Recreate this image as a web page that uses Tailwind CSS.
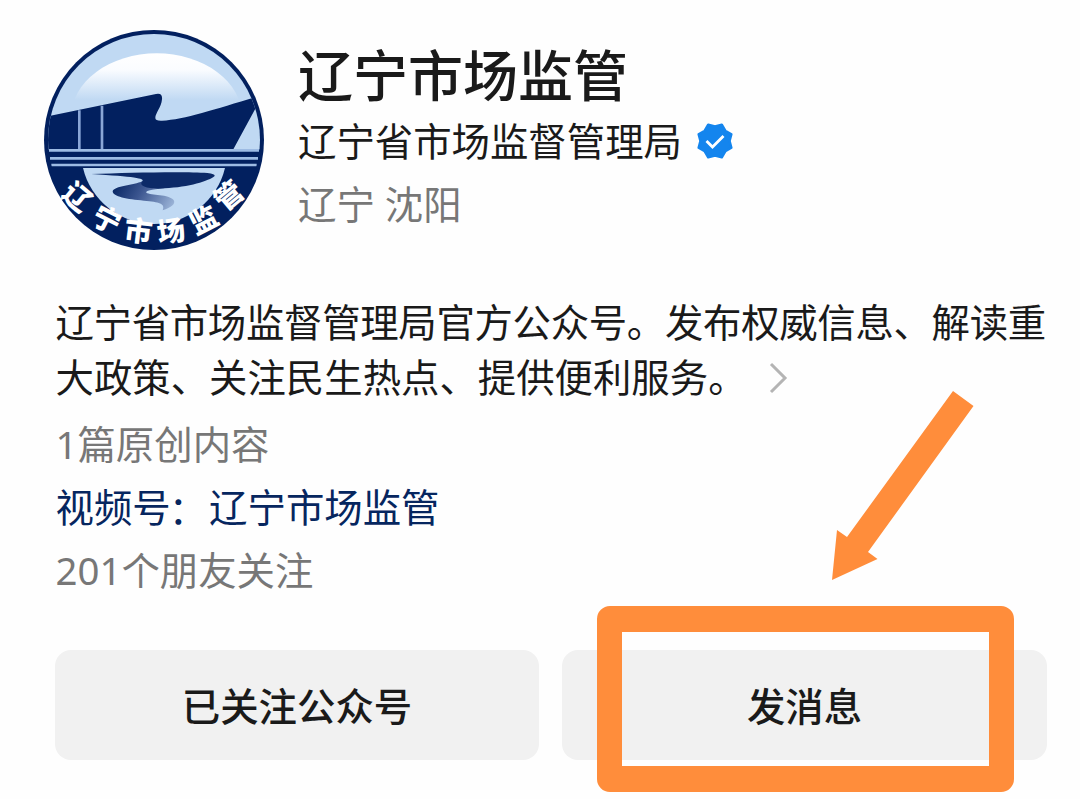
<!DOCTYPE html>
<html lang="zh-CN">
<head>
<meta charset="utf-8">
<title>辽宁市场监管</title>
<script src="https://cdn.jsdelivr.net/npm/@tailwindcss/browser@4"></script>
</head>
<body class="bg-white">
<main class="relative w-[1080px] h-[799px] overflow-hidden bg-[#fefefe] pt-5 font-['Noto_Sans','Noto_Sans_CJK_SC',sans-serif] text-[38.4px] text-[#1a1a1a] whitespace-nowrap">
  <header class="flex pl-[34px] h-[240px]">
    <svg class="w-[240px] h-[240px] shrink-0" viewBox="0 0 720 720">
      <defs>
        <linearGradient id="sun" x1="0" y1="100" x2="0" y2="240" gradientUnits="userSpaceOnUse"><stop offset="0" stop-color="#fff"/><stop offset=".35" stop-color="#fafcff"/><stop offset="1" stop-color="#c0d9f3"/></linearGradient>
        <linearGradient id="river" x1="240" y1="480" x2="410" y2="575" gradientUnits="userSpaceOnUse"><stop offset="0" stop-color="#02215f"/><stop offset=".45" stop-color="#3c5690"/><stop offset="1" stop-color="#9db6d9"/></linearGradient>
        <clipPath id="disc"><circle cx="360" cy="360" r="318"/></clipPath>
      </defs>
      <circle cx="360" cy="360" r="330" fill="#02205f"/>
      <g clip-path="url(#disc)">
        <rect x="30" y="30" width="660" height="360" fill="#c0d9f3"/>
        <ellipse cx="368" cy="290" rx="256" ry="190" fill="url(#sun)"/>
        <path d="M30 291L366 222Q386 218 384 238C382 262 364 280 364 294Q364 303 384 302C455 299 555 263 690 224V244L664 266L598 388H30Z" fill="#02205f"/>
        <path d="M30 387H690V445H30Z" fill="#02205f"/>
        <path d="M136 271V388M204 257V388" stroke="#8aa6d6" stroke-width="8"/>
        <path d="M45 391H675M48 415H672M52 435H668" stroke="#9dbbe3" stroke-width="8"/>
      </g>
      <path d="M147 444H573A219 219 0 0 1 147 444Z" fill="#c0d9f3"/>
      <path d="M325 484C300 496 240 498 236 514C236 530 280 538 330 542C375 546 395 550 386 571C412 563 426 551 419 540C405 522 350 526 337 518C335 512 350 509 392 505Z" fill="url(#river)"/>
      <path d="M172 462C280 458 450 454 520 459Q544 462 542 468C525 483 465 501 392 505C350 509 310 500 325 484C334 475 300 470 172 462Z" fill="#0c2a68"/>
      <g class="font-['Noto_Sans_CJK_SC',sans-serif] font-black" font-size="84" fill="#fff" text-anchor="middle">
        <text y="32" transform="translate(131 530) rotate(40)">辽</text>
        <text y="32" transform="translate(219 598) rotate(27)">宁</text>
        <text y="32" transform="translate(313 632) rotate(7)">市</text>
        <text y="32" transform="translate(411 632) rotate(-9)">场</text>
        <text y="32" transform="translate(508 598) rotate(-27)">监</text>
        <text y="32" transform="translate(583 526) rotate(-40)">管</text>
      </g>
    </svg>
    <div class="pl-6 pt-[19px]">
      <h1 class="h-[71px] leading-[71px] text-[55px] font-medium">辽宁市场监管</h1>
      <div class="h-[62px] leading-[62px] flex items-center">
        <span>辽宁省市场监督管理局</span>
        <svg class="ml-[14px] w-[38px] h-[38px]" viewBox="-19 -19 38 38"><path d="M0 -14.600L6.800 -16.400L10.300 -10.300L16.400 -6.800L14.600 0L16.400 6.800L10.300 10.300L6.800 16.400L0 14.600L-6.800 16.400L-10.300 10.300L-16.400 6.800L-14.600 0L-16.400 -6.800L-10.300 -10.300L-6.800 -16.400Z" fill="#1485ee" stroke="#1485ee" stroke-width="2.400" stroke-linejoin="round"/><path d="M-8.500 0L-2.500 6L8.500 -5" fill="none" stroke="#fff" stroke-width="2.800"/></svg>
      </div>
      <p class="h-[64px] leading-[64px] text-[#777]">辽宁 沈阳</p>
    </div>
  </header>
  <section class="pl-[55.5px] pt-[35px]">
    <p class="h-[55px] leading-[55px] tracking-[-0.3px]">辽宁省市场监督管理局官方公众号。发布权威信息、解读重</p>
    <div class="h-[55px] leading-[55px] flex items-center">
      <span>大政策、关注民生热点、提供便利服务。</span>
      <svg class="ml-[22px] w-[20px] h-[32px]" viewBox="0 0 20 32"><path d="M2 2L16 16L2 30" fill="none" stroke="#b4b4b4" stroke-width="3"/></svg>
    </div>
    <p class="mt-[8px] h-[63px] leading-[63px] text-[#777]">1篇原创内容</p>
    <p class="h-[63px] leading-[63px] text-[#06265f]">视频号<span class="relative top-[2px] -left-[2px]">：</span>辽宁市场监管</p>
    <p class="h-[63px] leading-[63px] text-[#777]">201个朋友关注</p>
  </section>
  <div class="flex gap-[23px] pl-[55px] mt-[48px] font-medium">
    <button class="w-[484px] h-[110px] rounded-2xl bg-[#f1f1f1] pt-[3px]">已关注公众号</button>
    <button class="w-[485px] h-[110px] rounded-2xl bg-[#f1f1f1] pt-[3px]">发消息</button>
  </div>
  <!-- Callout around the message button -->
  <div class="absolute left-[597px] top-[606px] w-[417px] h-[186px] rounded-[13px] border-x-[25px] border-y-[26px] border-[#ff8d3b]"></div>
  <svg class="absolute left-0 top-0 w-[1080px] h-[799px] pointer-events-none" viewBox="0 0 1080 799"><path d="M953 391L973.500 406L868 552L877.500 559L832 580L837 530L847 537Z" fill="#ff8d3b"/></svg>
</main>
</body>
</html>
